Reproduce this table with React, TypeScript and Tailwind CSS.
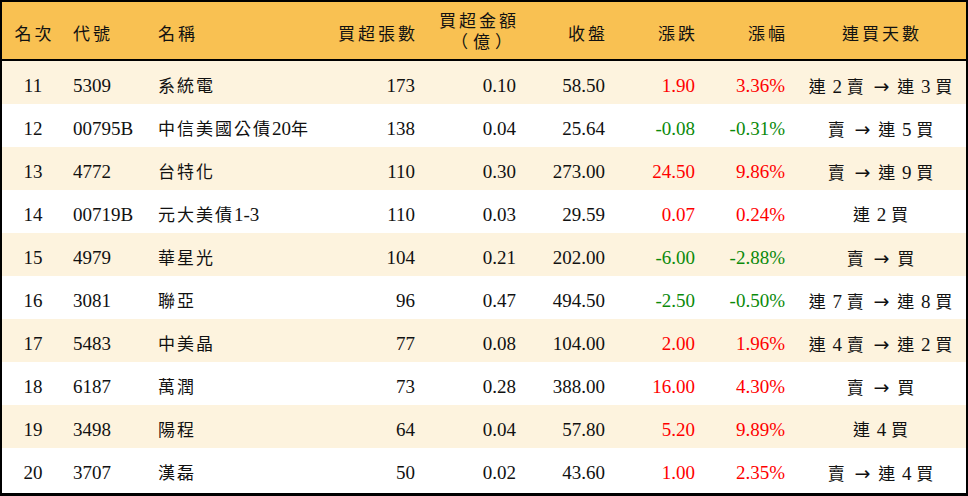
import React from "react";

type Row = {
  rank: number;
  code: string;
  name: string;
  lots: number;
  amount: string;
  close: string;
  change: string;
  pct: string;
  streak: string;
};

const rows: Row[] = [
  { rank: 11, code: "5309", name: "系統電", lots: 173, amount: "0.10", close: "58.50", change: "1.90", pct: "3.36%", streak: "連 2 賣 → 連 3 買" },
  { rank: 12, code: "00795B", name: "中信美國公債20年", lots: 138, amount: "0.04", close: "25.64", change: "-0.08", pct: "-0.31%", streak: "賣 → 連 5 買" },
  { rank: 13, code: "4772", name: "台特化", lots: 110, amount: "0.30", close: "273.00", change: "24.50", pct: "9.86%", streak: "賣 → 連 9 買" },
  { rank: 14, code: "00719B", name: "元大美債1-3", lots: 110, amount: "0.03", close: "29.59", change: "0.07", pct: "0.24%", streak: "連 2 買" },
  { rank: 15, code: "4979", name: "華星光", lots: 104, amount: "0.21", close: "202.00", change: "-6.00", pct: "-2.88%", streak: "賣 → 買" },
  { rank: 16, code: "3081", name: "聯亞", lots: 96, amount: "0.47", close: "494.50", change: "-2.50", pct: "-0.50%", streak: "連 7 賣 → 連 8 買" },
  { rank: 17, code: "5483", name: "中美晶", lots: 77, amount: "0.08", close: "104.00", change: "2.00", pct: "1.96%", streak: "連 4 賣 → 連 2 買" },
  { rank: 18, code: "6187", name: "萬潤", lots: 73, amount: "0.28", close: "388.00", change: "16.00", pct: "4.30%", streak: "賣 → 買" },
  { rank: 19, code: "3498", name: "陽程", lots: 64, amount: "0.04", close: "57.80", change: "5.20", pct: "9.89%", streak: "連 4 買" },
  { rank: 20, code: "3707", name: "漢磊", lots: 50, amount: "0.02", close: "43.60", change: "1.00", pct: "2.35%", streak: "賣 → 連 4 買" },
];

const cols =
  "grid grid-cols-[62px_86px_178px_97px_101px_89px_90px_90px_171px] items-center";

const CJK = /([\u3000-\u9fff\uff00-\uffef]+|→)/;

// CJK runs get a smaller size and tracking so they sit like the kai glyphs
function Txt({ children }: { children: string }) {
  const parts = children.split(CJK);
  return (
    <>
      {parts.map((p, i) => {
        if (p === "→")
          return (
            <span key={i} className="font-['DejaVu_Sans',sans-serif] text-[19px] mx-[3px]">
              →
            </span>
          );
        if (/[\u3000-\u9fff\uff00-\uffef]/.test(p))
          return (
            <span key={i} className="text-[17px] tracking-[2px]">
              {p}
            </span>
          );
        return <span key={i}>{p}</span>;
      })}
    </>
  );
}

function Head({ children }: { children: string }) {
  return <span className="text-[17px] tracking-[3px]">{children}</span>;
}

export default function App() {
  return (
    <div className="w-[968px] h-[496px] bg-white font-['Liberation_Serif','Noto_Sans_CJK_TC',serif] text-[19px] text-[#111]">
      <div className="flex flex-col border-t-2 border-x-2 border-b-[3px] border-black h-full">
        <div className={`${cols} h-[59px] pt-[5px] bg-[#f9c152] border-b-2 border-black leading-none`}>
          <div className="text-center pl-[3px]">
            <Head>名次</Head>
          </div>
          <div className="pl-[9px]">
            <Head>代號</Head>
          </div>
          <div className="pl-[8px]">
            <Head>名稱</Head>
          </div>
          <div className="text-right pr-[7px]">
            <Head>買超張數</Head>
          </div>
          <div className="flex justify-end pr-[7px] -mt-[3px]">
            <div className="flex flex-col items-end gap-[4px]">
              <Head>買超金額</Head>
              <span className="text-[17px] tracking-[5px] pr-[2px]">（億）</span>
            </div>
          </div>
          <div className="text-right pr-[7px]">
            <Head>收盤</Head>
          </div>
          <div className="text-right pr-[7px]">
            <Head>漲跌</Head>
          </div>
          <div className="text-right pr-[7px]">
            <Head>漲幅</Head>
          </div>
          <div className="text-center pl-[3px]">
            <Head>連買天數</Head>
          </div>
        </div>
        {rows.map((r, idx) => {
          const up = !r.change.startsWith("-");
          const tone = up ? "text-[#ff0000]" : "text-[#0b8a0b]";
          return (
            <div
              key={r.rank}
              className={`${cols} h-[43px] pt-[8px] ${idx % 2 === 0 ? "bg-[#fdf3de]" : "bg-white"}`}
            >
              <div className="text-center">{r.rank}</div>
              <div className="pl-[9px]">{r.code}</div>
              <div className="pl-[8px] whitespace-nowrap">
                <Txt>{r.name}</Txt>
              </div>
              <div className="text-right pr-[10px]">{r.lots}</div>
              <div className="text-right pr-[10px]">{r.amount}</div>
              <div className="text-right pr-[10px]">{r.close}</div>
              <div className={`text-right pr-[10px] ${tone}`}>{r.change}</div>
              <div className={`text-right pr-[10px] ${tone}`}>{r.pct}</div>
              <div className="text-center whitespace-nowrap pl-[2px]">
                <Txt>{r.streak}</Txt>
              </div>
            </div>
          );
        })}
      </div>
    </div>
  );
}
